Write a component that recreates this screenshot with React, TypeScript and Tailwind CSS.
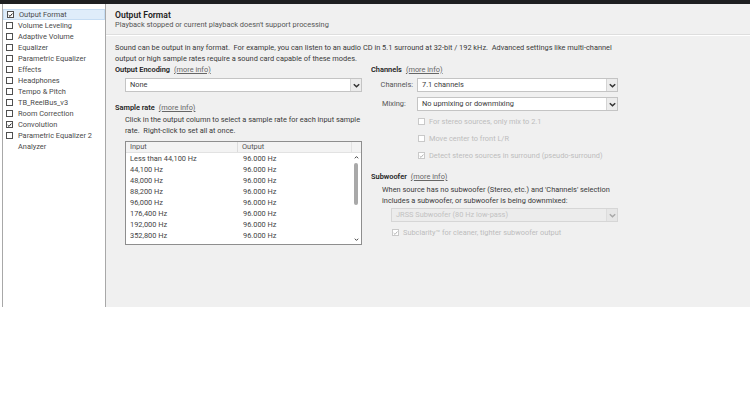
import React from "react";

const FONT = { fontFamily: "Roboto, 'Noto Sans', Arial, sans-serif" };

function Check({ checked, disabled }: { checked?: boolean; disabled?: boolean }) {
  const border = disabled ? "border-[#c9c9c9]" : "border-[#505050]";
  const stroke = disabled ? "#b5b5b5" : "#222";
  return (
    <span className={`inline-flex w-[7px] h-[7px] border ${border} bg-white shrink-0 items-center justify-center`}>
      {checked && (
        <svg width="6" height="6" viewBox="0 0 6 6">
          <path d="M0.8 3.1 L2.4 4.7 L5.3 1.2" fill="none" stroke={stroke} strokeWidth="1.2" />
        </svg>
      )}
    </span>
  );
}

function Chevron({ disabled }: { disabled?: boolean }) {
  return (
    <svg width="7" height="5" viewBox="0 0 7 5">
      <path d="M0.8 1.2 L3.5 3.8 L6.2 1.2" fill="none" stroke={disabled ? "#a8a8a8" : "#333"} strokeWidth="1.5" />
    </svg>
  );
}

function Select({ value, width, disabled }: { value: string; width: string; disabled?: boolean }) {
  return (
    <div
      className={`flex h-[14px] ${width} border ${disabled ? "border-[#d6d6d6] bg-[#ececec]" : "border-[#c4c4c4] bg-white"}`}
    >
      <div className={`flex-1 flex items-center pl-[4px] ${disabled ? "text-[#c2c2c2]" : "text-[#3a3a3a]"}`}>
        {value}
      </div>
      <div className={`w-[11px] flex items-center justify-center border-l ${disabled ? "border-[#dcdcdc] bg-[#e6e6e6]" : "border-[#d4d4d4] bg-[#ececec]"}`}>
        <Chevron disabled={disabled} />
      </div>
    </div>
  );
}

const items: [string, boolean][] = [
  ["Output Format", true],
  ["Volume Leveling", false],
  ["Adaptive Volume", false],
  ["Equalizer", false],
  ["Parametric Equalizer", false],
  ["Effects", false],
  ["Headphones", false],
  ["Tempo & Pitch", false],
  ["TB_ReelBus_v3", false],
  ["Room Correction", false],
  ["Convolution", true],
  ["Parametric Equalizer 2", false],
];

const rates = [
  "Less than 44,100 Hz",
  "44,100 Hz",
  "48,000 Hz",
  "88,200 Hz",
  "96,000 Hz",
  "176,400 Hz",
  "192,000 Hz",
  "352,800 Hz",
];

function Heading({ title }: { title: string }) {
  return (
    <div className="h-[11px] leading-[11px]">
      <span className="font-semibold text-[#222]">{title}</span>
      <span className="ml-[4px] text-[#666] underline">(more info)</span>
    </div>
  );
}

export default function App() {
  return (
    <div className="w-[750px] h-[399px] bg-white overflow-hidden opacity-[0.995]" style={FONT}>
      <div className="h-[4px] bg-[#1e1f21]" />
      <div className="flex h-[303px]">
        <div className="w-[2px] bg-white" />
        <div className="w-[104px] border-l border-r border-[#a8a8a8] bg-white pt-[5px] text-[7.4px] text-[#4a4a4a]">
          {items.map(([name, checked], i) => (
            <div
              key={name}
              className={`h-[11px] flex items-center pl-[3px] ${i === 0 ? "bg-[#dfedfa] border border-[#c6ddf3]" : ""}`}
            >
              <Check checked={checked} />
              <span className="ml-[5px] whitespace-nowrap">{name}</span>
            </div>
          ))}
          <div className="h-[11px] flex items-center pl-[15px]">Analyzer</div>
        </div>
        <div className="flex-1 bg-[#f0f0f0] text-[7.4px]">
          <div className="pl-[9px] pt-[6px] pb-[4px] border-b border-[#dedede]">
            <div className="h-[10px] leading-[10px] text-[8.6px] font-semibold text-[#222]">Output Format</div>
            <div className="h-[10px] leading-[10px] text-[#555]">
              Playback stopped or current playback doesn't support processing
            </div>
          </div>
          <div className="h-px bg-white" />
          <div className="pl-[9px] pt-[6px] text-[#3a3a3a]">
            <div className="leading-[11px] whitespace-nowrap">
              Sound can be output in any format.&nbsp; For example, you can listen to an audio CD in 5.1 surround at 32-bit / 192 kHz.&nbsp; Advanced settings like multi-channel
              <br />
              output or high sample rates require a sound card capable of these modes.
            </div>
            <div className="flex">
              <div className="w-[256px]">
                <Heading title="Output Encoding" />
                <div className="mt-[3px] ml-[10px]">
                  <Select value="None" width="w-[237px]" />
                </div>
                <div className="mt-[10px]">
                  <Heading title="Sample rate" />
                </div>
                <div className="ml-[10px] mt-[1px] leading-[11px] whitespace-nowrap">
                  Click in the output column to select a sample rate for each input sample
                  <br />
                  rate.&nbsp; Right-click to set all at once.
                </div>
                <div className="ml-[10px] mt-[5px] w-[237px] h-[104px] border border-[#8e8e8e] bg-white flex">
                  <div className="flex-1">
                    <div className="h-[11px] flex bg-[#f3f3f3] border-b border-[#e2e2e2] text-[#555]">
                      <div className="w-[112px] pl-[4px] flex items-center border-r border-[#dcdcdc]">Input</div>
                      <div className="flex-1 pl-[4px] flex items-center">Output</div>
                    </div>
                    {rates.map((r) => (
                      <div key={r} className="h-[11px] flex text-[#444]">
                        <div className="w-[112px] pl-[4px] flex items-center whitespace-nowrap">{r}</div>
                        <div className="flex-1 pl-[5px] flex items-center">96.000 Hz</div>
                      </div>
                    ))}
                  </div>
                  <div className="w-[10px] flex flex-col">
                    <div className="h-[11px] bg-[#f3f3f3] border-b border-l border-[#e2e2e2]" />
                    <div className="flex-1 flex flex-col items-center">
                      <svg width="5" height="5" viewBox="0 0 5 5" className="mt-[2px]">
                        <path d="M0.8 3.3 L2.5 1.6 L4.2 3.3" fill="none" stroke="#444" strokeWidth="1" />
                      </svg>
                      <div className="w-[4px] h-[42px] mt-[3px] rounded-full bg-[#a9a9a9]" />
                      <div className="flex-1" />
                      <svg width="5" height="5" viewBox="0 0 5 5" className="mb-[2px]">
                        <path d="M0.8 1.7 L2.5 3.4 L4.2 1.7" fill="none" stroke="#444" strokeWidth="1" />
                      </svg>
                    </div>
                  </div>
                </div>
              </div>
              <div className="w-[252px]">
                <Heading title="Channels" />
                <div className="mt-[3px] flex items-center">
                  <div className="w-[46px] pr-[4px] text-right text-[#555] whitespace-nowrap">Channels:</div>
                  <Select value="7.1 channels" width="w-[201px]" />
                </div>
                <div className="mt-[5px] flex items-center">
                  <div className="w-[46px] pl-[11px] text-[#555]">Mixing:</div>
                  <Select value="No upmixing or downmixing" width="w-[201px]" />
                </div>
                <div className="mt-[2px] ml-[47px] text-[#bdbdbd]">
                  <div className="h-[17px] flex items-center">
                    <Check disabled />
                    <span className="ml-[4px]">For stereo sources, only mix to 2.1</span>
                  </div>
                  <div className="h-[17px] flex items-center">
                    <Check disabled />
                    <span className="ml-[4px]">Move center to front L/R</span>
                  </div>
                  <div className="h-[17px] flex items-center">
                    <Check checked disabled />
                    <span className="ml-[4px]">Detect stereo sources in surround (pseudo-surround)</span>
                  </div>
                </div>
                <div className="mt-[7px]">
                  <Heading title="Subwoofer" />
                </div>
                <div className="ml-[11px] mt-[2px] leading-[11px] whitespace-nowrap">
                  When source has no subwoofer (Stereo, etc.) and 'Channels' selection
                  <br />
                  includes a subwoofer, or subwoofer is being downmixed:
                </div>
                <div className="mt-[2px] ml-[20px]">
                  <Select value="JRSS Subwoofer (80 Hz low-pass)" width="w-[227px]" disabled />
                </div>
                <div className="mt-[2px] ml-[21px] h-[17px] flex items-center text-[#bdbdbd]">
                  <Check checked disabled />
                  <span className="ml-[4px]">Subclarity™ for cleaner, tighter subwoofer output</span>
                </div>
              </div>
            </div>
          </div>
        </div>
      </div>
    </div>
  );
}
